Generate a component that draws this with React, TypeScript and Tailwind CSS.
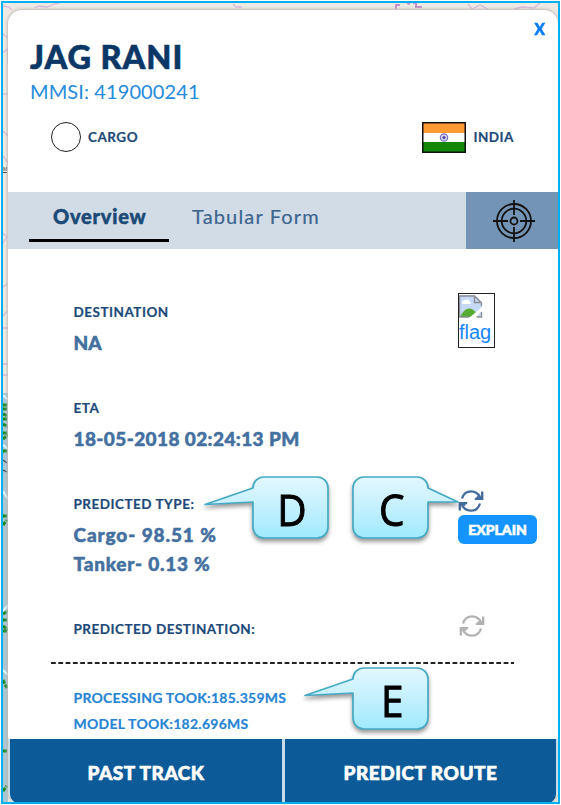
import React from "react";

const label = "h-5 whitespace-nowrap text-[13.5px] leading-5 font-bold tracking-[0.5px] text-[#1d4a78] [-webkit-text-stroke:0.2px_#1d4a78]";
const value = "whitespace-nowrap text-[19px] leading-[30px] font-black text-[#44709f] [-webkit-text-stroke:0.5px_#44709f]";
const timing = "h-[26px] text-[14px] leading-5 font-bold tracking-[0.25px] whitespace-nowrap text-[#2784d3] [-webkit-text-stroke:0.2px_#2784d3]";

function Callout({ letter, path, className, box }: { letter: string; path: string; className: string; box: string }) {
  return (
    <div className={"absolute h-[76px] w-[136px] " + className}>
      <svg className="absolute inset-0 overflow-visible" width="136" height="76" viewBox="0 0 136 76">
        <defs>
          <linearGradient id={"fill" + letter} x1="0" y1="0" x2="0" y2="1">
            <stop offset="0" stopColor="#e2f8ff" />
            <stop offset="0.5" stopColor="#c4f0fe" />
            <stop offset="1" stopColor="#9eeaff" />
          </linearGradient>
        </defs>
        <path d={path} fill={"url(#fill" + letter + ")"} stroke="#46aac5" strokeWidth="1.7" strokeLinejoin="round" className="drop-shadow-[0_3px_2px_rgba(0,0,0,0.4)]" />
      </svg>
      <div className={"absolute top-0 flex h-[65px] w-[76px] items-center justify-center font-['Open_Sans','Noto_Sans',sans-serif] text-[44px] leading-none font-medium text-black [-webkit-text-stroke:1px_black] " + box}>
        <span className="inline-block scale-x-[0.92]">{letter}</span>
      </div>
    </div>
  );
}

const leftBubble =
  "M60 1H113A11 11 0 0 1 124 12V51A11 11 0 0 1 113 62H60A11 11 0 0 1 49 51V26L1 28.5L49 12A11 11 0 0 1 60 1Z";
const rightBubble =
  "M12 1H65A11 11 0 0 1 76 12L106 26H76V51A11 11 0 0 1 65 62H12A11 11 0 0 1 1 51V12A11 11 0 0 1 12 1Z";

function Refresh({ color }: { color: string }) {
  return (
    <svg width="26" height="24" viewBox="0 0 26 24" fill="none" stroke={color} strokeWidth="2.3">
      <path d="M4 9.5C5.4 4.8 8.7 2.3 13 2.3c4 0 7 2 9.2 5.8" />
      <path d="M24.2 2.4v7.4h-7.4M24 9.6l-5.4-1.6" />
      <path d="M22 14.5C20.6 19.2 17.3 21.7 13 21.7c-4 0-7-2-9.2-5.8" />
      <path d="M1.8 21.6v-7.4h7.4M2 14.4l5.4 1.6" />
    </svg>
  );
}

function Flag() {
  return (
    <svg width="44" height="31" viewBox="0 0 44 31">
      <rect width="44" height="31" fill="#111" />
      <rect x="1.5" y="1.5" width="41" height="9.5" fill="#ff9933" />
      <rect x="1.5" y="11" width="41" height="9" fill="#fff" />
      <rect x="1.5" y="20" width="41" height="9.5" fill="#138808" />
      <circle cx="22" cy="15.5" r="3.7" fill="#d5d3ef" stroke="#7773bd" strokeWidth="1.2" />
      <circle cx="22" cy="15.5" r="1.5" fill="#4742a0" />
    </svg>
  );
}

function Target() {
  return (
    <svg width="42" height="42" viewBox="0 0 42 42" fill="none" stroke="#111" strokeWidth="1.8">
      <circle cx="21" cy="21" r="17" />
      <circle cx="21" cy="21" r="12.3" />
      <circle cx="21" cy="21" r="3.5" />
      <path d="M21 0v15M21 27v15M0 21h15M27 21h15" />
    </svg>
  );
}

function BrokenImage() {
  return (
    <svg width="24" height="23" viewBox="0 0 24 23">
      <path d="M0 0H16L23 7V22H0Z" fill="#c5d8f5" />
      <path d="M3 8a3 3 0 0 1 3-3 3 3 0 0 1 5 2 2 2 0 0 1 1 2H3Z" fill="#fff" />
      <path d="M1 22C4 15 9 12 13 14l5 4v4Z" fill="#57ad32" />
      <path d="M10 23L24 11V15L16 23Z" fill="#fff" />
      <path d="M.5 22V1H15.5L22.5 8V11M15.5 1V7.5H22.5M22.5 17V22H18M0 22H10" fill="none" stroke="#8b8f94" strokeWidth="1.4" />
    </svg>
  );
}

function MapBackdrop() {
  return (
    <svg className="absolute inset-0" width="555" height="799" viewBox="0 0 555 799">
      <rect width="555" height="799" fill="#eeeae3" />
      <rect y="390" width="5" height="409" fill="#a9c7d3" />
      <g fill="none" stroke="#dcb8dc" strokeWidth="1.3">
        <path d="M0 3l6 1 3 3M31 5l5-2 8 1 7-3 5-1M230 1l3 3h6M465 1l4 5 8-4 8 4M511 6l8-2 12 1 6-5" />
        <path d="M393 6v-4h4M410 0h3v4h6M404 0l3 1" stroke="#c98fcb" strokeWidth="2" />
        <path d="M0 31l5 4M0 50l5-5v15M0 91h5M0 128l5 5M0 153l5 7M0 230l4 4M0 240l4-6M0 284l4-3M0 313l4-5M0 325h5M0 361h5M0 372h5" />
      </g>
      <path d="M0 402h5M0 406h5M0 411l5 2M0 416h5M0 421l5 3M0 430h5M0 436l5-4M0 448h5M0 513h5M0 522l4-5M0 611l5-3M0 617h5M0 623l5 4M0 628h5M0 677l4 8M0 748h4M0 788l4-5" fill="none" stroke="#178a26" strokeWidth="3" strokeDasharray="4 1" />
      <path d="M0 392l5 5M0 442l5 4M0 488l5 8M0 608l5-6M0 667l5 5" fill="none" stroke="#dff8fa" strokeWidth="2" />
      <path d="M0 169.5h4M0 457l4 3M0 467l4 2" fill="none" stroke="#444" strokeWidth="1.2" />
      <text x="0" y="168" fontSize="5" fontFamily="Liberation Sans" fill="#333">M</text>
    </svg>
  );
}

export default function App() {
  return (
    <div className="h-[805px] w-[561px] overflow-hidden bg-white p-px font-[Lato,'Noto_Sans',sans-serif]">
      <div className="relative h-[803px] w-[559px] overflow-hidden border-2 border-[#00b0f0]">
        <MapBackdrop />
        <div className="relative mt-[7px] ml-[5px] flex h-[794px] w-[550px] flex-col overflow-hidden rounded-[14px] bg-white shadow-[0_0_3px_1px_#bdb9b5]">
          <header className="relative h-[182px] shrink-0 pt-[27px] pl-[22px]">
            <button className="absolute top-[9px] right-[12px] text-[17px] leading-5 font-black text-[#0a7cff] [-webkit-text-stroke:0.6px_#0a7cff]"><span className="inline-block scale-x-90">X</span></button>
            <h1 className="h-10 text-[32.5px] leading-10 font-black tracking-[0.9px] whitespace-nowrap text-[#0b3767] [-webkit-text-stroke:0.6px_#0b3767]">JAG RANI</h1>
            <p className="h-7 text-[20px] leading-7 tracking-[0.1px] whitespace-nowrap text-[#258bdc]">MMSI: 419000241</p>
            <div className="mt-4 flex h-8 items-center justify-between pr-11 pl-[21px]">
              <div className="flex items-center gap-[7px]">
                <div className="h-[30px] w-[30px] rounded-full border-[1.5px] border-[#222]" />
                <span className={label}>CARGO</span>
              </div>
              <div className="flex items-center gap-[7px]">
                <Flag />
                <span className={label}>INDIA</span>
              </div>
            </div>
          </header>
          <nav className="flex h-[57px] shrink-0 bg-[#d2dce6]">
            <div className="ml-[21px] h-[50px] w-[140px] border-b-[3px] border-black pl-6 text-[20px] leading-[48px] font-black tracking-[0.75px] whitespace-nowrap text-[#1b4a77] [-webkit-text-stroke:0.5px_#1b4a77]">Overview</div>
            <div className="ml-[23px] flex-1 text-[20px] leading-[48px] font-normal tracking-[1.15px] whitespace-nowrap text-[#3d658d] [-webkit-text-stroke:0.2px_#3d658d]">Tabular Form</div>
            <div className="flex w-[92px] items-center justify-center bg-[#7494b6] pl-1"><Target /></div>
          </nav>
          <main className="h-[490px] shrink-0">
            <section className="flex h-[149px] justify-between pt-[44px] pr-[63px] pl-[65.5px]">
              <div className="pt-[9px]">
                <div className={label}>DESTINATION</div>
                <div className={value + " mt-[6px]"}>NA</div>
              </div>
              <div className="h-[55px] w-[37px] border-[1.5px] border-[#222] pt-px">
                <BrokenImage />
                <div className="font-['Liberation_Sans',sans-serif] text-[20px] leading-[29px] text-[#1585ff]">flag</div>
              </div>
            </section>
            <section className="h-[90px] pl-[65.5px]">
              <div className={label}>ETA</div>
              <div className={value + " mt-[6px] tracking-[0.4px]"}>18-05-2018 02:24:13 PM</div>
            </section>
            <section className="flex h-[131px] justify-between pt-[6px] pr-[21px] pl-[65.5px]">
              <div>
                <div className={label}>PREDICTED TYPE:</div>
                <div className={value + " mt-[6px] tracking-[0.9px]"}>Cargo- 98.51 %</div>
                <div className={value + " -mt-px tracking-[0.75px]"}>Tanker- 0.13 %</div>
              </div>
              <div className="-mt-[5px] flex w-[79px] flex-col items-start">
                <Refresh color="#416b9b" />
                <button className="mt-[2px] h-[29px] w-[79px] rounded-[6px] bg-[#1594ff] text-[14px] leading-[30px] font-black text-white [-webkit-text-stroke:0.6px_white]">EXPLAIN</button>
              </div>
            </section>
            <section className="ml-[43px] flex h-[43px] w-[463px] justify-between pr-[29px] pl-[22.5px]">
              <div className={label}>PREDICTED DESTINATION:</div>
              <div className="-mt-[5px]"><Refresh color="#b2b2b2" /></div>
            </section>
            <svg className="ml-[43px] h-[2px] w-[463px]" viewBox="0 0 463 2"><path d="M0 1H463" stroke="#222" strokeWidth="2" strokeDasharray="4.8 2.5" /></svg>
            <section className="pt-[24px] pl-[65.5px]">
              <div className={timing}>PROCESSING TOOK:185.359MS</div>
              <div className={timing}>MODEL TOOK:182.696MS</div>
            </section>
          </main>
          <footer className="relative flex h-[65px] shrink-0 gap-[3px] bg-[#c8dbe7] px-[2px] text-[19px] leading-[68px] font-black tracking-[0.5px] text-white [-webkit-text-stroke:0.6px_white]">
            <button className="w-[272px] rounded-bl-[10px] bg-[#0d5a98]">PAST TRACK</button>
            <button className="flex-1 rounded-br-[10px] bg-[#0d5a98]">PREDICT ROUTE</button>
          </footer>
        </div>
        <Callout letter="D" path={leftBubble} className="top-[473px] left-[201px]" box="left-[50px]" />
        <Callout letter="C" path={rightBubble} className="top-[473px] left-[349px]" box="left-[2px]" />
        <Callout letter="E" path={leftBubble} className="top-[664px] left-[301px]" box="left-[50px]" />
      </div>
    </div>
  );
}
